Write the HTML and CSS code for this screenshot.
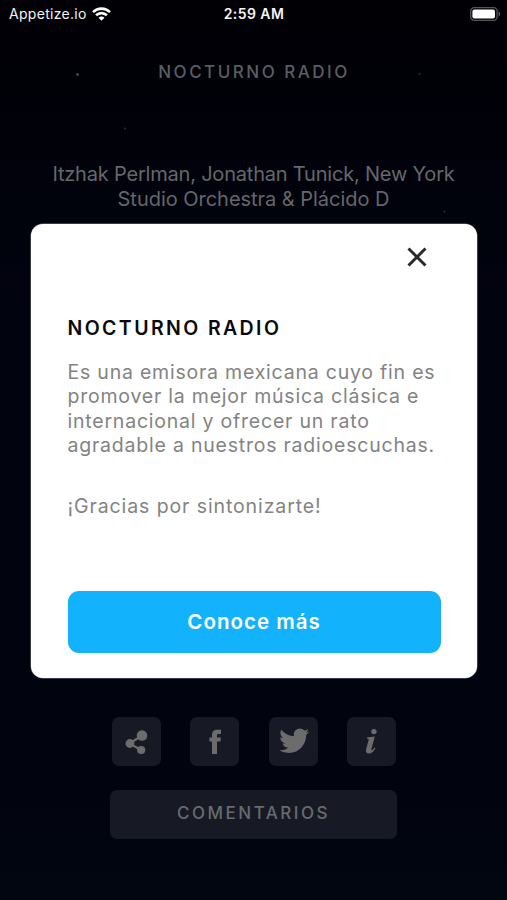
FILE: index.html
```html
<!DOCTYPE html>
<html lang="es">
<head>
<meta charset="utf-8">
<title>Nocturno Radio</title>
<link rel="stylesheet" href="styles.css">
</head>
<body>
<div class="screen">
  <header class="status">
    <div class="carrier"><span>Appetize.io</span>
      <svg width="19" height="14" viewBox="0 0 19 14"><g fill="none" stroke="#fff" stroke-width="2.6"><path d="M1 5.1a12.2 12.2 0 0 1 17 0"/><path d="M4.1 8.3a7.8 7.8 0 0 1 10.800 0"/></g><path d="M6.500 10.800a4.400 4.400 0 0 1 6 0l-3 3z" fill="#fff"/></svg>
    </div>
    <time class="clock">2:59 AM</time>
    <svg class="battery" width="31" height="14" viewBox="0 0 31 14"><rect x=".7" y=".7" width="26.4" height="12.6" rx="3.6" fill="none" stroke="#55565a" stroke-width="1.3"/><rect x="2.400" y="2.400" width="22.600" height="9.200" rx="2" fill="#fff"/><path d="M28.600 4.600c2 .700 2 4.100 0 4.800z" fill="#66676b"/></svg>
  </header>
  <h1 class="title">NOCTURNO RADIO</h1>
  <p class="track"><span class="track-a">Itzhak Perlman, Jonathan Tunick, New York</span><br><span class="track-b">Studio Orchestra &amp; Plácido D</span></p>
  <nav class="social">
    <a class="tile"><svg width="49" height="49" viewBox="0 0 49 49"><path d="M30 18.500 17.500 26.500 29 33" fill="none" stroke="#6b6c6b" stroke-width="2.200"/><g fill="#6b6c6b"><circle cx="30" cy="18.500" r="5.300"/><circle cx="17.900" cy="26.500" r="4.400"/><circle cx="29.200" cy="33" r="4.100"/></g></svg></a>
    <a class="tile"><svg width="49" height="49" viewBox="0 0 49 49"><path d="M22 37V24.600H19.400V20.400H22V18.100C22 14.400 24 12.700 27.300 12.700H31V17H28.700C27.300 17 27 17.600 27 18.700V20.400H31L30.400 24.600H27V37Z" fill="#6b6c6b"/></svg></a>
    <a class="tile"><svg width="49" height="49" viewBox="0 0 49 49"><path transform="translate(10.200 8.800) scale(1.250)" d="M23.950 4.570a10 10 0 0 1-2.820.770 4.960 4.960 0 0 0 2.160-2.720c-.950.550-2.010.950-3.130 1.180a4.920 4.920 0 0 0-8.380 4.480C7.690 8.090 4.070 6.130 1.640 3.160a4.820 4.820 0 0 0-.670 2.480c0 1.710.870 3.210 2.190 4.100a4.900 4.900 0 0 1-2.230-.620v.060a4.920 4.920 0 0 0 3.950 4.830 5 5 0 0 1-2.210.080 4.940 4.940 0 0 0 4.600 3.420A9.870 9.870 0 0 1 0 19.540a14 14 0 0 0 7.550 2.210c9.050 0 14-7.500 14-13.980 0-.210 0-.420-.020-.630a9.940 9.940 0 0 0 2.460-2.550z" fill="#6b6c6b"/></svg></a>
    <a class="tile"><svg width="49" height="49" viewBox="0 0 49 49"><circle cx="26.900" cy="14.600" r="2.700" fill="#6b6c6b"/><path d="M20 20.600 27.800 19.600 24.500 31.700C24 33.700 25 33.700 26 32.500L27.600 30.500 28.500 31.200C26.500 34.500 24.500 36.500 21.800 36.500 19.200 36.500 18.500 34.700 19.100 32.200L21.500 23.500C21.900 22 21.500 21.700 20 21.700Z" fill="#6b6c6b"/></svg></a>
  </nav>
  <div class="comments">COMENTARIOS</div>
  <svg class="stars" width="507" height="230"><g fill="#55565c"><circle cx="77.500" cy="74.500" r="1.300"/><circle cx="125" cy="128.500" r="1" opacity=".55"/><circle cx="419.500" cy="74" r="1" opacity=".5"/><circle cx="444.500" cy="211.500" r="1" opacity=".5"/></g></svg>
  <section class="dialog">
    <button class="close" aria-label="Cerrar"><svg width="20" height="20" viewBox="0 0 20 20"><path d="M1.500 1.500 18.500 18.500M18.500 1.500 1.500 18.500" stroke="#29292c" stroke-width="2.900"/></svg></button>
    <h2>NOCTURNO RADIO</h2>
    <p class="about">Es una emisora mexicana cuyo fin es<br>promover la mejor música clásica e<br>internacional y ofrecer un rato<br>agradable a nuestros radioescuchas.</p>
    <p class="thanks">¡Gracias por sintonizarte!</p>
    <button class="more">Conoce más</button>
  </section>
</div>
</body>
</html>
```
FILE: styles.css
```css
* { box-sizing: border-box; }
body { margin: 0; background: #02060f; }
h1, h2, p { margin: 0; }
button { border: 0; padding: 0; font: inherit; }
svg { display: block; }
.screen {
  position: relative;
  width: 507px;
  height: 900px;
  overflow: hidden;
  background: linear-gradient(#000005, #01030f 35%, #01030f 80%, #02060f);
  font-family: Inter, sans-serif;
  text-align: center;
}
.status {
  display: grid;
  grid-template-columns: 1fr auto 1fr;
  align-items: center;
  height: 27px;
  padding: 0 6px 0 9px;
  color: #f4f4f4;
  font-size: 14px;
}
.carrier { display: flex; align-items: center; gap: 5px; letter-spacing: .3px; }
.clock { font-weight: 600; letter-spacing: .45px; margin-right: 2px; }
.battery { justify-self: end; }
.title {
  margin-top: 33px;
  line-height: 24px;
  font-size: 17px;
  font-weight: 500;
  letter-spacing: 2.5px;
  text-indent: 1px;
  color: #5c5d61;
}
.track {
  margin-top: 78px;
  height: 50px;
  font-size: 20px;
  line-height: 25px;
  color: #66676b;
  white-space: nowrap;
}
.track-a { letter-spacing: -.2px; }
.track-b { letter-spacing: -.03px; }
.social {
  display: flex;
  justify-content: center;
  gap: 29.2px;
  margin-top: 505px;
  padding-left: 1px;
}
.tile {
  width: 49px;
  height: 49px;
  border-radius: 7px;
  background: #171a24;
}
.comments {
  width: 287px;
  height: 48.500px;
  margin: 24px auto 0;
  border-radius: 7px;
  background: #171a24;
  color: #686a70;
  font-size: 17px;
  font-weight: 500;
  line-height: 46px;
  letter-spacing: 2.5px;
}
.stars { position: absolute; left: 0; top: 0; }
.dialog {
  position: absolute;
  left: 31px;
  top: 223.5px;
  width: 446px;
  height: 454px;
  padding: 23.5px 36.5px 0;
  border-radius: 12px;
  background: #fff;
  box-shadow: 0 0 0 .5px #77777c;
  text-align: left;
  white-space: nowrap;
}
.close { display: block; margin: 0 13.5px 0 auto; width: 20px; height: 20px; background: none; }
h2 {
  margin-top: 49px;
  font-size: 19.5px;
  line-height: 24px;
  font-weight: 600;
  letter-spacing: 2.4px;
  color: #09090b;
}
.about, .thanks {
  font-size: 19.5px;
  line-height: 24.5px;
  letter-spacing: .78px;
  color: #838383;
}
.about { margin-top: 19.500px; }
.thanks { margin-top: 36.5px; letter-spacing: .9px; }
.more {
  display: block;
  width: 373px;
  height: 62px;
  margin-top: 72px;
  border-radius: 11px;
  background: #12b2fd;
  color: #fff;
  font-size: 20.5px;
  font-weight: 600;
  letter-spacing: 1px;
}
```
